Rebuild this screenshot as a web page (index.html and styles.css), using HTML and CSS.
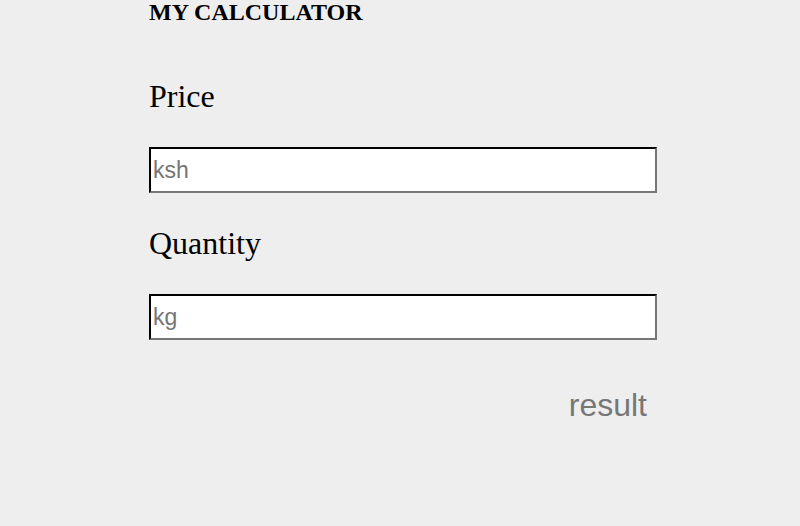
FILE: index.html
```html
<!DOCTYPE html>
<html>
<head>
<meta charset="utf-8">
<title>My Calculator</title>
<link rel="stylesheet" href="styles.css">
</head>
<body>
<main class="calc">
  <h1 class="title">MY CALCULATOR</h1>
  <label class="label label-first" for="price">Price</label>
  <input class="field" id="price" type="text" placeholder="ksh">
  <label class="label" for="qty">Quantity</label>
  <input class="field" id="qty" type="text" placeholder="kg">
  <div class="result">result</div>
</main>
</body>
</html>
```
FILE: styles.css
```css
html, body {
  margin: 0;
  padding: 0;
  background: #eeeeee;
}
.calc {
  width: 508px;
  margin-left: 149px;
  display: flex;
  flex-direction: column;
}
.title {
  margin: 0;
  font-family: "Liberation Serif", "Times New Roman", serif;
  font-weight: bold;
  font-size: 24px;
  line-height: 24px;
  color: #000;
}
.label {
  display: block;
  font-family: "Liberation Serif", "Times New Roman", serif;
  font-size: 32px;
  line-height: 37px;
  color: #000;
  margin-top: 32px;
  margin-bottom: 32px;
}
.label-first {
  margin-top: 54px;
}
.field {
  box-sizing: border-box;
  width: 508px;
  height: 46px;
  margin: 0;
  padding: 1px 2px;
  border: 2px inset #767676;
  border-top-color: #1a1a1a;
  border-left-color: #1a1a1a;
  border-bottom-color: #767676;
  border-right-color: #767676;
  background: #fff;
  font-family: "Liberation Sans", Arial, sans-serif;
  font-size: 23px;
  color: #000;
}
.field::placeholder {
  color: #757575;
}
.result {
  margin-top: 47px;
  padding-right: 10px;
  text-align: right;
  font-family: "Liberation Sans", Arial, sans-serif;
  font-size: 32px;
  line-height: 37px;
  color: #777777;
}
```
